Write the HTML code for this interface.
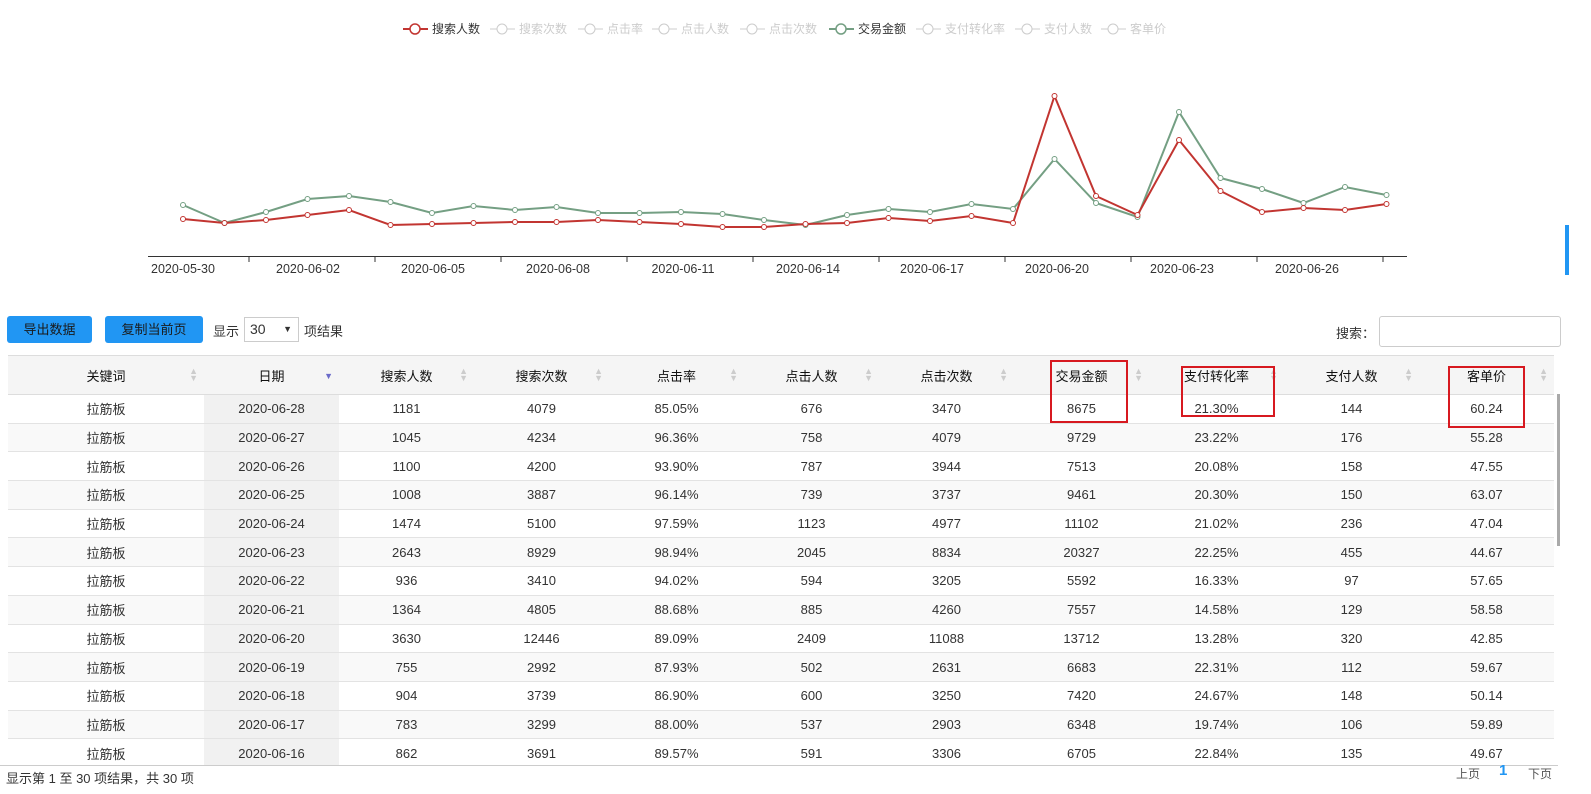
<!DOCTYPE html>
<html><head><meta charset="utf-8">
<style>
*{box-sizing:border-box;margin:0;padding:0}
body{width:1591px;height:794px;overflow:hidden;background:#fff;font-family:"Liberation Sans","Noto Sans CJK SC",sans-serif;color:#333;font-size:13px;position:relative}
.abs{position:absolute}
.btn{position:absolute;top:316px;height:27px;background:#2196f3;color:#1a1a1a;border-radius:3px;font-size:13px;line-height:27px;text-align:center}
table{border-collapse:collapse;table-layout:fixed;position:absolute;left:8px;top:355px;width:1546px}
th{height:39px;font-weight:normal;color:#111;font-size:13px;background:#f5f5f5;border-top:1px solid #ddd;border-bottom:1px solid #ddd;position:relative;text-align:center}
th .s{position:absolute;right:6px;top:12px;color:#ccc;font-size:9px;line-height:7px;font-weight:normal}
td{height:28.7px;text-align:center;border-bottom:1px solid #e3e3e3;font-size:13px}
tr:nth-child(odd) td{background:#f9f9f9}
td:nth-child(2){background:#f1f1f1!important}
.box{position:absolute;border:2px solid #d71920}
</style></head><body>
<svg class="abs" style="left:0;top:0" width="1591" height="300">
<g font-size="12" fill="#333">
<line x1="403" y1="29" x2="428" y2="29" stroke="#c23531" stroke-width="2"/><circle cx="415" cy="29" r="5" fill="#fff" stroke="#c23531" stroke-width="1.5"/><text x="432" y="33">搜索人数</text>
<g stroke="#ccc" fill="#fff"><line x1="490" y1="29" x2="515" y2="29"/><circle cx="502" cy="29" r="5"/>
<line x1="578" y1="29" x2="603" y2="29"/><circle cx="590" cy="29" r="5"/>
<line x1="652" y1="29" x2="677" y2="29"/><circle cx="664" cy="29" r="5"/>
<line x1="740" y1="29" x2="765" y2="29"/><circle cx="752" cy="29" r="5"/>
<line x1="916" y1="29" x2="941" y2="29"/><circle cx="928" cy="29" r="5"/>
<line x1="1015" y1="29" x2="1040" y2="29"/><circle cx="1027" cy="29" r="5"/>
<line x1="1101" y1="29" x2="1126" y2="29"/><circle cx="1113" cy="29" r="5"/></g>
<g fill="#ccc"><text x="519" y="33">搜索次数</text><text x="607" y="33">点击率</text><text x="681" y="33">点击人数</text><text x="769" y="33">点击次数</text><text x="945" y="33">支付转化率</text><text x="1044" y="33">支付人数</text><text x="1130" y="33">客单价</text></g>
<line x1="829" y1="29" x2="854" y2="29" stroke="#749f83" stroke-width="2"/><circle cx="841" cy="29" r="5" fill="#fff" stroke="#749f83" stroke-width="1.5"/><text x="858" y="33">交易金额</text>
</g>
<line x1="148" y1="256.5" x2="1407" y2="256.5" stroke="#333"/>
<g stroke="#333"><line x1="249" y1="256" x2="249" y2="262"/><line x1="375" y1="256" x2="375" y2="262"/><line x1="501" y1="256" x2="501" y2="262"/><line x1="627" y1="256" x2="627" y2="262"/><line x1="753" y1="256" x2="753" y2="262"/><line x1="879" y1="256" x2="879" y2="262"/><line x1="1005" y1="256" x2="1005" y2="262"/><line x1="1131" y1="256" x2="1131" y2="262"/><line x1="1257" y1="256" x2="1257" y2="262"/><line x1="1383" y1="256" x2="1383" y2="262"/></g>
<g font-size="12.5" fill="#333" text-anchor="middle"><text x="183" y="273">2020-05-30</text><text x="308" y="273">2020-06-02</text><text x="433" y="273">2020-06-05</text><text x="558" y="273">2020-06-08</text><text x="683" y="273">2020-06-11</text><text x="808" y="273">2020-06-14</text><text x="932" y="273">2020-06-17</text><text x="1057" y="273">2020-06-20</text><text x="1182" y="273">2020-06-23</text><text x="1307" y="273">2020-06-26</text></g>
<g id="g"></g>
</svg>
<script>
var r=[218,222,219,214,209,224,223,222,221,221,219,221,223,226,226,223,222,217,220,215,222,95,195,214,139,190,211,207,209,203];
var gr=[204,222,211,198,195,201,212,205,209,206,212,212,211,213,219,224,214,208,211,203,208,158,202,216,111,177,188,202,186,194];
function s(a,c){var p=a.map(function(y,i){return (183+41.5*i)+','+(y+1)}).join(' ');var h='<polyline points="'+p+'" fill="none" stroke="'+c+'" stroke-width="2"/>';a.forEach(function(y,i){h+='<circle cx="'+(183+41.5*i)+'" cy="'+(y+1)+'" r="2.5" fill="#fff" stroke="'+c+'"/>'});return h}
document.getElementById('g').innerHTML=s(gr,'#749f83')+s(r,'#c23531');
</script>
<div class="btn" style="left:7px;width:85px">导出数据</div>
<div class="btn" style="left:105px;width:98px">复制当前页</div>
<div class="abs" style="left:213px;top:321px;font-size:13px">显示</div>
<div class="abs" style="left:244px;top:317px;width:55px;height:25px;border:1px solid #ccc;font-size:14px;line-height:23px;padding-left:5px">30<span style="position:absolute;right:6px;font-size:9px">▼</span></div>
<div class="abs" style="left:304px;top:321px;font-size:13px">项结果</div>
<div class="abs" style="left:1336px;top:323px;font-size:13px">搜索：</div>
<div class="abs" style="left:1379px;top:316px;width:182px;height:31px;border:1px solid #ccc;border-radius:3px"></div>
<div class="abs" style="left:1557px;top:394px;width:3px;height:152px;background:#aaa"></div>
<div class="abs" style="left:0;top:766px;width:1591px;height:28px;background:#fff"></div>
<div style="position:absolute;left:0;top:355px;width:1591px;height:411px;overflow:hidden">
<table style="top:0">
<colgroup><col style="width:196px"><col span="10" style="width:135px"></colgroup>
<tr><th>关键词<span class="s">▲<br>▼</span></th><th>日期<span class="s" style="color:#6b6bc9;top:17px">▼</span></th><th>搜索人数<span class="s">▲<br>▼</span></th><th>搜索次数<span class="s">▲<br>▼</span></th><th>点击率<span class="s">▲<br>▼</span></th><th>点击人数<span class="s">▲<br>▼</span></th><th>点击次数<span class="s">▲<br>▼</span></th><th>交易金额<span class="s">▲<br>▼</span></th><th>支付转化率<span class="s">▲<br>▼</span></th><th>支付人数<span class="s">▲<br>▼</span></th><th>客单价<span class="s">▲<br>▼</span></th></tr>
<tr><td>拉筋板</td><td>2020-06-28</td><td>1181</td><td>4079</td><td>85.05%</td><td>676</td><td>3470</td><td>8675</td><td>21.30%</td><td>144</td><td>60.24</td></tr>
<tr><td>拉筋板</td><td>2020-06-27</td><td>1045</td><td>4234</td><td>96.36%</td><td>758</td><td>4079</td><td>9729</td><td>23.22%</td><td>176</td><td>55.28</td></tr>
<tr><td>拉筋板</td><td>2020-06-26</td><td>1100</td><td>4200</td><td>93.90%</td><td>787</td><td>3944</td><td>7513</td><td>20.08%</td><td>158</td><td>47.55</td></tr>
<tr><td>拉筋板</td><td>2020-06-25</td><td>1008</td><td>3887</td><td>96.14%</td><td>739</td><td>3737</td><td>9461</td><td>20.30%</td><td>150</td><td>63.07</td></tr>
<tr><td>拉筋板</td><td>2020-06-24</td><td>1474</td><td>5100</td><td>97.59%</td><td>1123</td><td>4977</td><td>11102</td><td>21.02%</td><td>236</td><td>47.04</td></tr>
<tr><td>拉筋板</td><td>2020-06-23</td><td>2643</td><td>8929</td><td>98.94%</td><td>2045</td><td>8834</td><td>20327</td><td>22.25%</td><td>455</td><td>44.67</td></tr>
<tr><td>拉筋板</td><td>2020-06-22</td><td>936</td><td>3410</td><td>94.02%</td><td>594</td><td>3205</td><td>5592</td><td>16.33%</td><td>97</td><td>57.65</td></tr>
<tr><td>拉筋板</td><td>2020-06-21</td><td>1364</td><td>4805</td><td>88.68%</td><td>885</td><td>4260</td><td>7557</td><td>14.58%</td><td>129</td><td>58.58</td></tr>
<tr><td>拉筋板</td><td>2020-06-20</td><td>3630</td><td>12446</td><td>89.09%</td><td>2409</td><td>11088</td><td>13712</td><td>13.28%</td><td>320</td><td>42.85</td></tr>
<tr><td>拉筋板</td><td>2020-06-19</td><td>755</td><td>2992</td><td>87.93%</td><td>502</td><td>2631</td><td>6683</td><td>22.31%</td><td>112</td><td>59.67</td></tr>
<tr><td>拉筋板</td><td>2020-06-18</td><td>904</td><td>3739</td><td>86.90%</td><td>600</td><td>3250</td><td>7420</td><td>24.67%</td><td>148</td><td>50.14</td></tr>
<tr><td>拉筋板</td><td>2020-06-17</td><td>783</td><td>3299</td><td>88.00%</td><td>537</td><td>2903</td><td>6348</td><td>19.74%</td><td>106</td><td>59.89</td></tr>
<tr><td>拉筋板</td><td>2020-06-16</td><td>862</td><td>3691</td><td>89.57%</td><td>591</td><td>3306</td><td>6705</td><td>22.84%</td><td>135</td><td>49.67</td></tr>
</table>
</div>
<div class="abs" style="left:0;top:765px;width:1558px;border-top:1px solid #ccc"></div>
<div class="box" style="left:1050px;top:360px;width:78px;height:63px"></div>
<div class="box" style="left:1181px;top:366px;width:94px;height:51px"></div>
<div class="box" style="left:1448px;top:366px;width:77px;height:62px"></div>
<div class="abs" style="left:6px;top:768px;font-size:13px">显示第 1 至 30 项结果，共 30 项</div>
<div class="abs" style="left:1456px;top:765px;font-size:12px;color:#555">上页</div>
<div class="abs" style="left:1499px;top:762px;font-size:15px;color:#2196f3;font-weight:bold">1</div>
<div class="abs" style="left:1528px;top:765px;font-size:12px;color:#555">下页</div>
<div class="abs" style="left:1565px;top:225px;width:4px;height:50px;background:#2196f3"></div>
</body></html>
